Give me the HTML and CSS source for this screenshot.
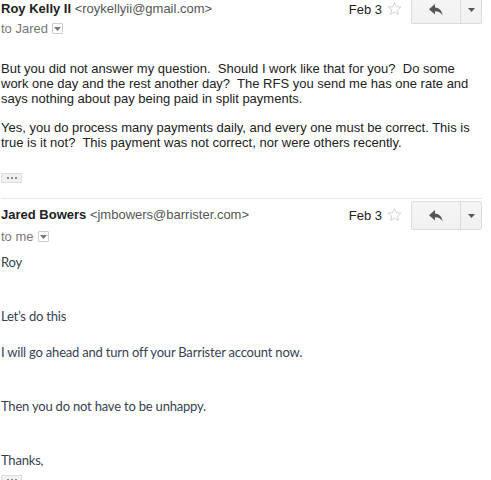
FILE: index.html
```html
<!DOCTYPE html>
<html lang="en">
<head>
  <meta charset="UTF-8">
  <meta name="viewport" content="width=device-width, initial-scale=1.0">
  <title>Conversation</title>
  <link rel="stylesheet" href="styles.css">
</head>
<body>
  <!-- first message -->
  <div class="message first">
    <div class="head">
      <div class="who">
        <div class="from"><b>Roy Kelly II</b> <span class="addr">&lt;roykellyii@gmail.com&gt;</span></div>
        <div class="to">to Jared <span class="mini-drop"><svg width="7" height="4" viewBox="0 0 7 4"><path d="M0 0h7L3.5 4z" fill="#777"/></svg></span></div>
      </div>
      <div class="date">Feb 3</div>
      <svg class="star" width="15" height="15" viewBox="0 0 24 24"><path d="M12 2.5l2.9 6.6 7.1.6-5.4 4.7 1.6 7-6.2-3.7-6.2 3.7 1.6-7L2 9.7l7.1-.6z" fill="none" stroke="#c8c8c8" stroke-width="1.3"/></svg>
      <div class="btns">
        <span class="reply"><svg width="14" height="12" viewBox="0 0 14 12"><path d="M6 0L0 5.2 6 10.4V7.2c3.6 0 5.9 1 7.6 4.2C13 7 10.6 4 6 3.5z" fill="#555"/></svg></span>
        <span class="more"><svg width="7" height="4" viewBox="0 0 7 4"><path d="M0 0h7L3.5 4z" fill="#555"/></svg></span>
      </div>
    </div>
    <div class="body plain">
      <p>But you did not answer my question.&nbsp; Should I work like that for you?&nbsp; Do some work one day and the rest another day?&nbsp; The RFS you send me has one rate and says nothing about pay being paid in split payments.</p>
      <p>Yes, you do process many payments daily, and every one must be correct. This is true is it not?&nbsp; This payment was not correct, nor were others recently.</p>
    </div>
    <div class="dots"><i></i><i></i><i></i></div>
  </div>

  <!-- second message -->
  <div class="message second">
    <div class="head">
      <div class="who">
        <div class="from"><b>Jared Bowers</b> <span class="addr">&lt;jmbowers@barrister.com&gt;</span></div>
        <div class="to">to me <span class="mini-drop"><svg width="7" height="4" viewBox="0 0 7 4"><path d="M0 0h7L3.5 4z" fill="#777"/></svg></span></div>
      </div>
      <div class="date">Feb 3</div>
      <svg class="star" width="15" height="15" viewBox="0 0 24 24"><path d="M12 2.5l2.9 6.6 7.1.6-5.4 4.7 1.6 7-6.2-3.7-6.2 3.7 1.6-7L2 9.7l7.1-.6z" fill="none" stroke="#c8c8c8" stroke-width="1.3"/></svg>
      <div class="btns">
        <span class="reply"><svg width="14" height="12" viewBox="0 0 14 12"><path d="M6 0L0 5.2 6 10.4V7.2c3.6 0 5.9 1 7.6 4.2C13 7 10.6 4 6 3.5z" fill="#555"/></svg></span>
        <span class="more"><svg width="7" height="4" viewBox="0 0 7 4"><path d="M0 0h7L3.5 4z" fill="#555"/></svg></span>
      </div>
    </div>
    <div class="body rich">
      <p>Roy</p>
      <p>&nbsp;</p>
      <p>&nbsp;</p>
      <p>Let’s do this</p>
      <p>&nbsp;</p>
      <p>I will go ahead and turn off your Barrister account now.</p>
      <p>&nbsp;</p>
      <p>&nbsp;</p>
      <p>Then you do not have to be unhappy.</p>
      <p>&nbsp;</p>
      <p>&nbsp;</p>
      <p>Thanks,</p>
    </div>
    <div class="dots"><i></i><i></i><i></i></div>
  </div>
</body>
</html>
```

FILE: styles.css
```css
body {
  margin: 0;
  padding: 0 9px 0 1px;
  font-family: Arial, "Liberation Sans", sans-serif;
  font-size: 13px;
  color: #222;
  background: #fff;
  overflow: hidden;
}
.message.first {
  margin-top: -5px;
  padding-bottom: 15px;
  border-bottom: 1px solid #e5e5e5;
}
.message.second {
  padding-top: 2px;
}
.head {
  display: flex;
  align-items: flex-start;
}
.who {
  flex: 1;
  padding-top: 6px;
}
.from b {
  color: #222;
}
.addr {
  color: #555;
}
.to {
  margin-top: 5px;
  color: #777;
  display: flex;
  align-items: center;
  gap: 4px;
}
.second .to {
  margin-top: 7px;
}
.mini-drop {
  display: inline-flex;
  align-items: center;
  justify-content: center;
  width: 9px;
  height: 9px;
  border: 1px solid #ccc;
  border-radius: 1px;
}
.date {
  padding-top: 7px;
  color: #222;
}
.star {
  margin: 6px 9px 0 5px;
}
.btns {
  display: flex;
  height: 27px;
  border: 1px solid #dcdcdc;
  border-radius: 2px;
  background: linear-gradient(#f5f5f5, #f1f1f1);
}
.reply {
  width: 48px;
  display: flex;
  align-items: center;
  justify-content: center;
  border-right: 1px solid #dcdcdc;
}
.more {
  width: 20px;
  display: flex;
  align-items: center;
  justify-content: center;
}
.body p {
  margin: 0;
}
.plain {
  margin-top: 25px;
  line-height: 15px;
}
.plain p + p {
  margin-top: 14px;
}
.dots {
  width: 19px;
  height: 8px;
  margin-top: 23px;
  border: 1px solid #ddd;
  background: #f1f1f1;
  display: flex;
  align-items: center;
  justify-content: center;
  gap: 2px;
}
.dots i {
  width: 2px;
  height: 2px;
  background: #888;
}
.rich {
  margin-top: 9px;
  font-family: Lato, "Open Sans", sans-serif;
  font-size: 13px;
  letter-spacing: -0.2px;
  line-height: 18px;
  color: #373f52;
}
.rich + .dots {
  margin-top: 6px;
}
```
